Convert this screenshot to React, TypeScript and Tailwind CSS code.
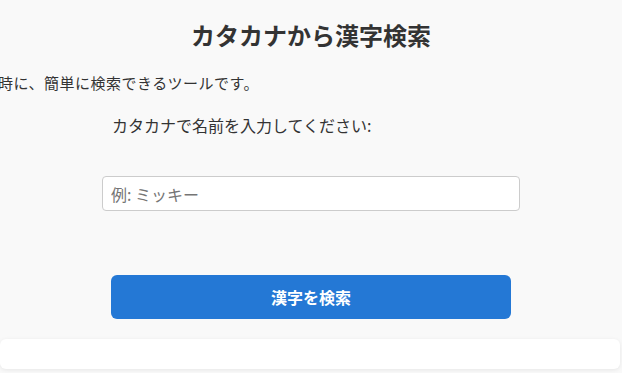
import React from "react";

export default function App() {
  return (
    <div
      className="w-[622px] h-[373px] overflow-hidden bg-[#f9f9f9] text-[#333]"
      style={{ fontFamily: '"Noto Sans CJK JP", "Noto Sans", sans-serif' }}
    >
      <div className="pt-[17px]">
        <h1 className="h-[36px] text-center text-[24px] leading-[36px] font-bold text-[#333]">
          カタカナから漢字検索
        </h1>
        <p className="mt-[20px] ml-[-2px] h-[20px] whitespace-nowrap text-[15px] leading-[20px] tracking-[0.5px] text-[#333]">
          時に、簡単に検索できるツールです。
        </p>
        <label className="mt-[20px] ml-[112px] block h-[24px] whitespace-nowrap text-[16px] leading-[24px] text-[#333]">
          カタカナで名前を入力してください:
        </label>
        <input
          type="text"
          placeholder="例: ミッキー"
          className="mt-[39px] ml-[102px] block h-[35px] w-[418px] rounded-[4px] border border-[#cccccc] bg-white px-[8px] text-[16px] text-[#333] outline-none placeholder:text-[#757575]"
        />
        <button className="mt-[64px] ml-[111px] flex h-[44px] w-[400px] items-center justify-center rounded-[6px] bg-[#2478d5] text-[16px] font-bold text-white">
          漢字を検索
        </button>
        <div className="mt-[20px] h-[30px] w-[620px] rounded-[6px] bg-white shadow-[0_1px_4px_rgba(0,0,0,0.08)]"></div>
      </div>
    </div>
  );
}
